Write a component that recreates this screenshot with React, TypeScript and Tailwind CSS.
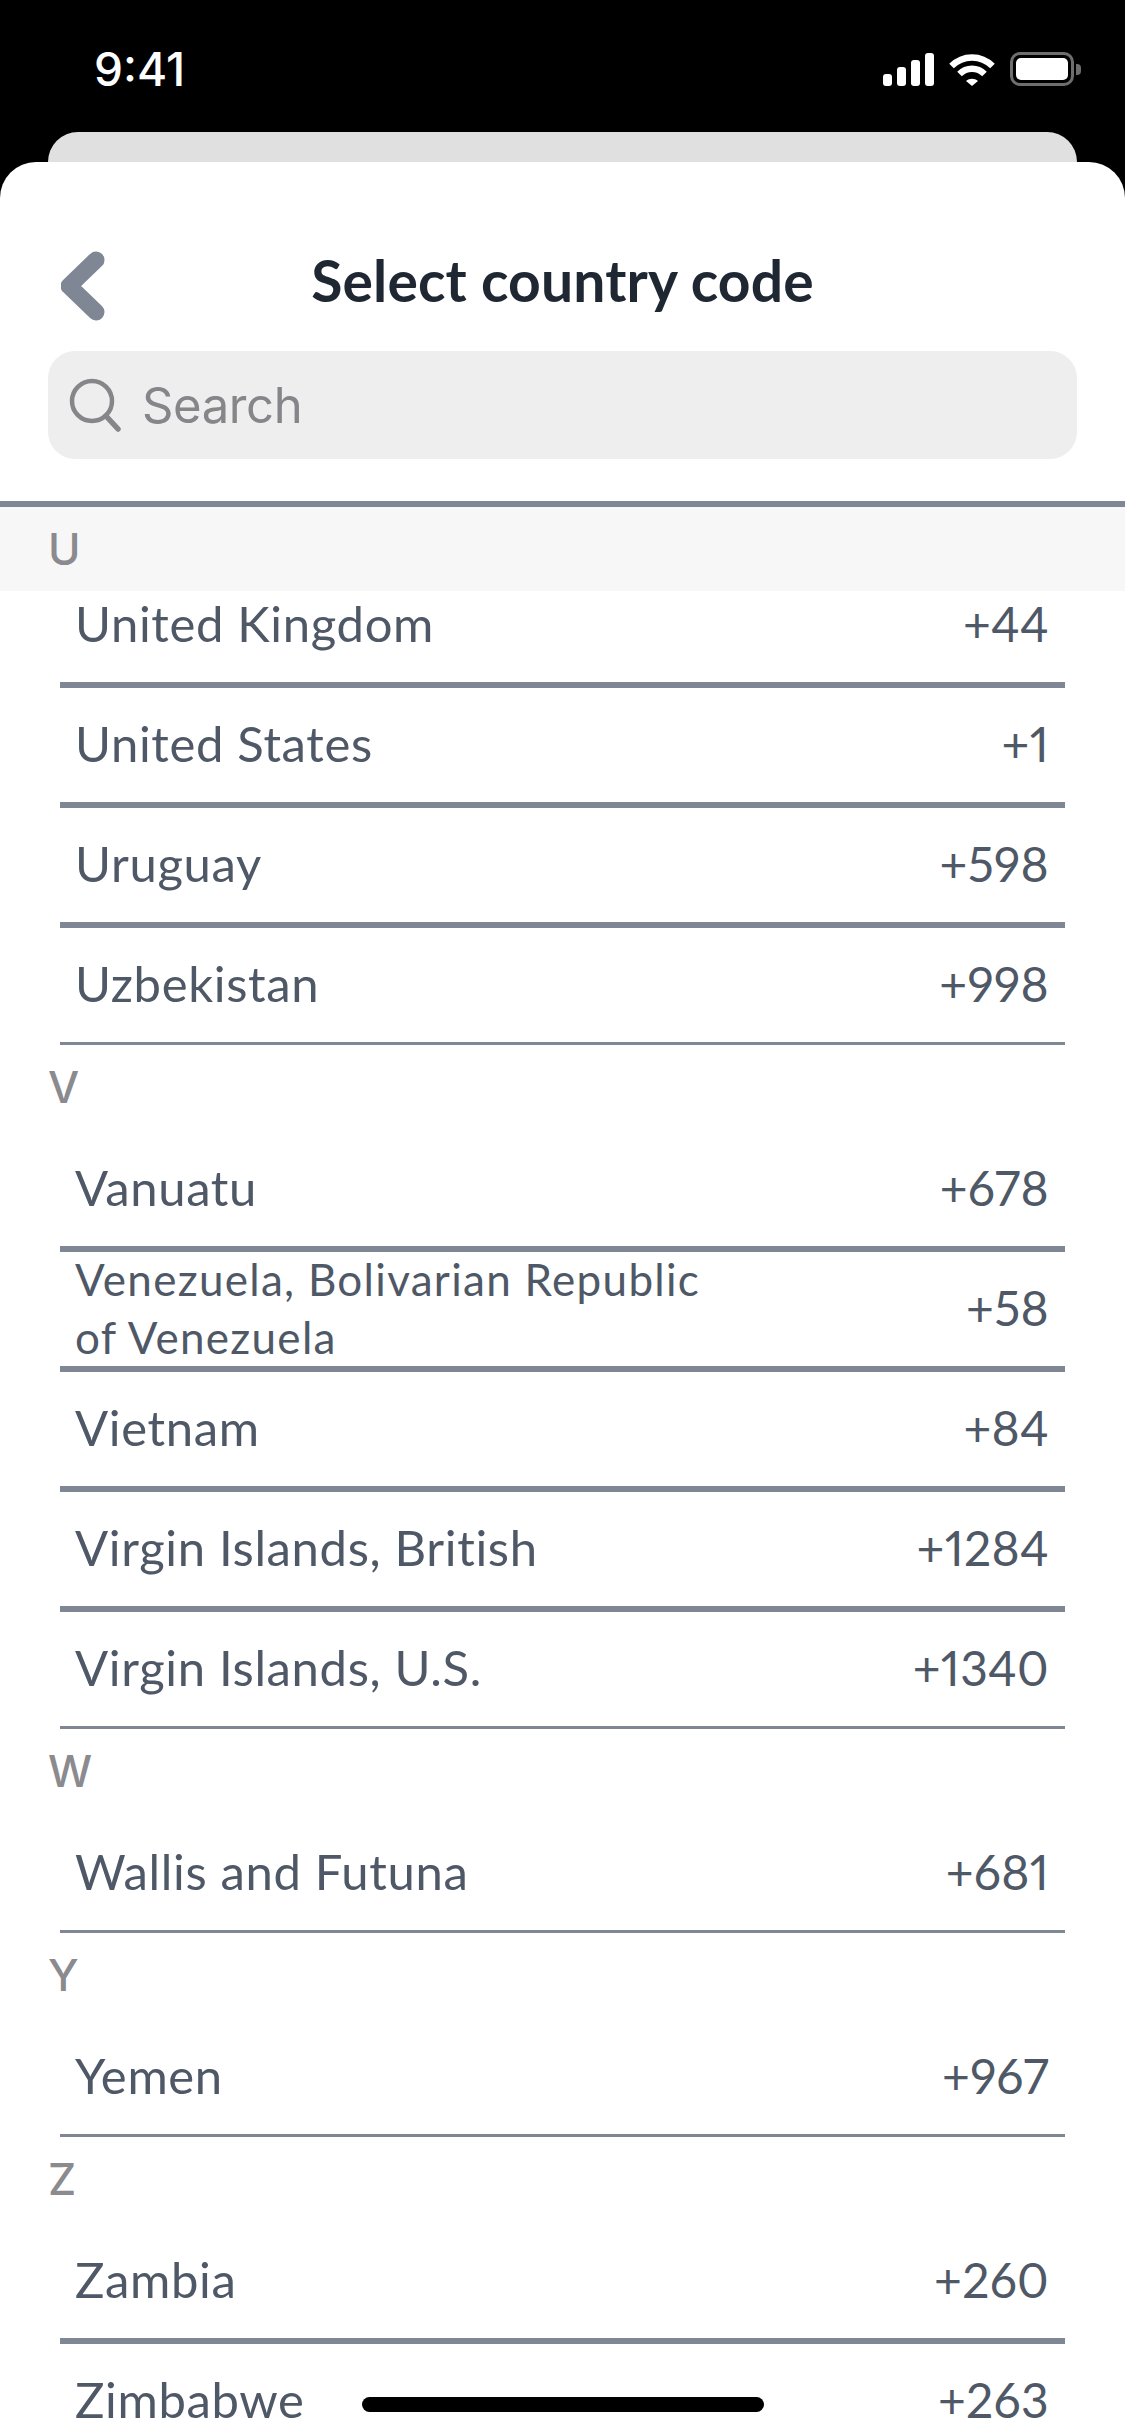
// App.tsx
const SECTIONS = [
  {
    letter: "U",
    rows: [
      ["United Kingdom", "+44"],
      ["United States", "+1"],
      ["Uruguay", "+598"],
      ["Uzbekistan", "+998"],
    ],
  },
  {
    letter: "V",
    rows: [
      ["Vanuatu", "+678"],
      ["Venezuela, Bolivarian Republic of Venezuela", "+58"],
      ["Vietnam", "+84"],
      ["Virgin Islands, British", "+1284"],
      ["Virgin Islands, U.S.", "+1340"],
    ],
  },
  { letter: "W", rows: [["Wallis and Futuna", "+681"]] },
  { letter: "Y", rows: [["Yemen", "+967"]] },
  {
    letter: "Z",
    rows: [
      ["Zambia", "+260"],
      ["Zimbabwe", "+263"],
    ],
  },
];

function StatusIcons() {
  return (
    <div className="flex items-center">
      {/* signal */}
      <svg width="51" height="33" viewBox="0 0 51 33" fill="#fff">
        <rect x="0" y="21" width="9" height="12" rx="3" />
        <rect x="14" y="14" width="9" height="19" rx="3" />
        <rect x="28" y="7" width="9" height="26" rx="3" />
        <rect x="42" y="0" width="9" height="33" rx="3" />
      </svg>
      {/* wifi */}
      <svg className="ml-[15px]" width="46" height="33" viewBox="0 0 46 33" fill="none" stroke="#fff" strokeWidth="6.5">
        <path d="M2.5 13 C14 1.5 32 1.5 43.5 13" />
        <path d="M10.5 21 C17.5 14 28.5 14 35.5 21" />
        <path d="M17 28 L23 33 L29 28 C25.5 25 20.5 25 17 28 Z" fill="#fff" stroke="none" />
      </svg>
      {/* battery */}
      <div className="ml-[15px] flex items-center">
        <div className="w-[64px] h-[34px] rounded-[10px] border-[3px] border-[#6e6e6e] p-[3px]">
          <div className="w-full h-full rounded-[5px] bg-white" />
        </div>
        <div className="ml-[2px] w-[5px] h-[11px] rounded-r-[4px] bg-[#6e6e6e]" />
      </div>
    </div>
  );
}

function Row({ name, code, last, first }: { name: string; code: string; last: boolean; first: boolean }) {
  return (
    <div
      className={`mx-[60px] pl-[15px] pr-[16px] pb-[3px] flex items-center justify-between text-[#4f5866] font-['Lato',sans-serif] ${
        last ? "h-[117px] border-b-[3px]" : "h-[120px] border-b-[6px]"
      } border-[#7f8694] ${first ? "-mt-[23px]" : ""}`}
    >
      <span
        className={
          name.length > 30
            ? "w-[650px] text-[44px] leading-[58px] tracking-[1.3px]"
            : "text-[49px] tracking-[0.65px]"
        }
      >
        {name}
      </span>
      <span className="text-[48px] proportional-nums tracking-[0.3px]">{code}</span>
    </div>
  );
}

export default function App() {
  return (
    <div className="relative w-[1125px] h-[2436px] bg-black overflow-hidden flex flex-col">
      {/* status bar */}
      <div className="h-[132px] shrink-0 pl-[94px] pr-[44px] pt-[52px] flex items-start justify-between">
        <span className="text-white text-[46px] leading-[34px] font-medium font-['Inter',sans-serif]">9:41</span>
        <StatusIcons />
      </div>

      <div className="h-[30px] shrink-0 mx-[48px] rounded-t-[30px] bg-[#e0e0e0]" />

      {/* sheet */}
      <div className="flex-1 min-h-0 flex flex-col rounded-t-[36px] bg-white overflow-hidden">
        <div className="mt-[60px] h-[118px] shrink-0 grid grid-cols-[1fr_auto_1fr] items-center">
          <svg className="ml-[61px] mt-[10px]" width="44" height="70" viewBox="0 0 44 70" fill="none">
            <path d="M35 9 L8 35 L35 61" stroke="#7f8694" strokeWidth="17" strokeLinecap="round" strokeLinejoin="round" />
          </svg>
          <h1 className="text-[57px] font-bold tracking-[0.15px] text-[#1f2733] font-['Lato',sans-serif]">Select country code</h1>
          <div />
        </div>

        <div className="mt-[11px] mx-[48px] h-[108px] shrink-0 rounded-[27px] bg-[#eeeeee] flex items-center pl-[21px]">
          <svg width="52" height="54" viewBox="0 0 52 54" fill="none" stroke="#85858a">
            <circle cx="23" cy="23" r="20" strokeWidth="4.5" />
            <path d="M37 38 L49 51" strokeWidth="5.5" strokeLinecap="round" />
          </svg>
          <span className="ml-[21px] pt-[2px] text-[49px] tracking-[-0.4px] text-[#85858a] font-['Inter',sans-serif]">Search</span>
        </div>

        <div className="mt-[42px] h-[6px] shrink-0 bg-[#7f8694]" />

        {/* list */}
        <div className="flex-1 min-h-0 overflow-hidden">
          {SECTIONS.map((section, s) => (
            <div key={section.letter}>
              <div
                className={`relative z-10 h-[84px] pl-[48px] flex items-center text-[44px] font-medium text-[#8a8a8f] font-['Inter',sans-serif] ${
                  s === 0 ? "bg-[#f7f7f7]" : "mb-[3px]"
                }`}
              >
                {section.letter}
              </div>
              {section.rows.map(([name, code], i) => (
                <Row
                  key={name}
                  name={name}
                  code={code}
                  first={s === 0 && i === 0}
                  last={i === section.rows.length - 1}
                />
              ))}
            </div>
          ))}
        </div>
      </div>

      {/* home indicator */}
      <div className="absolute z-20 left-[362px] top-[2397px] w-[402px] h-[15px] rounded-full bg-black" />
    </div>
  );
}
